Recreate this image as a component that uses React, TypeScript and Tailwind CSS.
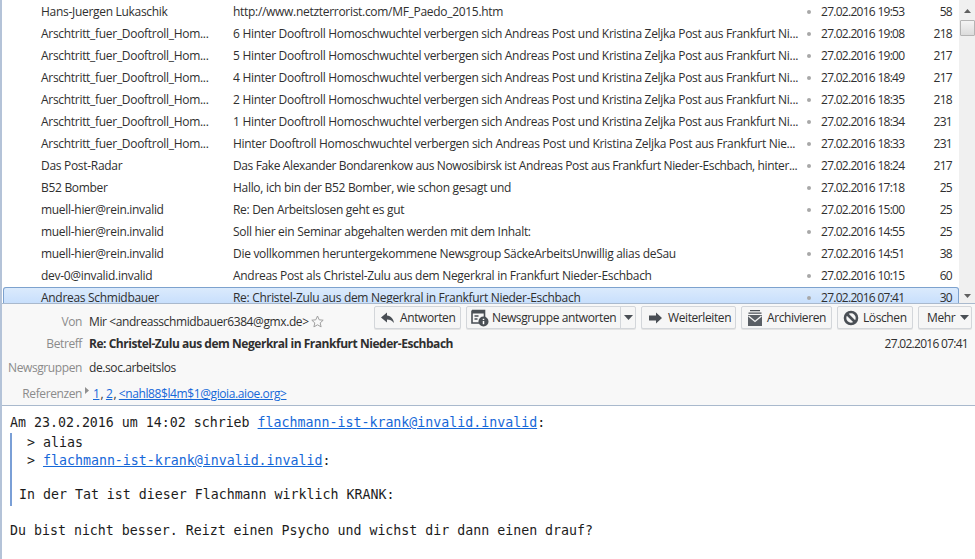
import React from 'react'

const hinter = 'Hinter Dooftroll Homoschwuchtel verbergen sich Andreas Post und Kristina Zeljka Post aus Frankfurt Ni...'
const arsch = 'Arschtritt_fuer_Dooftroll_Hom...'

const rows = [
    ['Hans-Juergen Lukaschik', 'http://www.netzterrorist.com/MF_Paedo_2015.htm', '27.02.2016 19:53', '58'],
    [arsch, '6 ' + hinter, '27.02.2016 19:08', '218'],
    [arsch, '5 ' + hinter, '27.02.2016 19:00', '217'],
    [arsch, '4 ' + hinter, '27.02.2016 18:49', '217'],
    [arsch, '2 ' + hinter, '27.02.2016 18:35', '218'],
    [arsch, '1 ' + hinter, '27.02.2016 18:34', '231'],
    [arsch, 'Hinter Dooftroll Homoschwuchtel verbergen sich Andreas Post und Kristina Zeljka Post aus Frankfurt Nie...', '27.02.2016 18:33', '231'],
    ['Das Post-Radar', 'Das Fake Alexander Bondarenkow aus Nowosibirsk ist Andreas Post aus Frankfurt Nieder-Eschbach, hinter...', '27.02.2016 18:24', '217'],
    ['B52 Bomber', 'Hallo, ich bin der B52 Bomber, wie schon gesagt und', '27.02.2016 17:18', '25'],
    ['muell-hier@rein.invalid', 'Re: Den Arbeitslosen geht es gut', '27.02.2016 15:00', '25'],
    ['muell-hier@rein.invalid', 'Soll hier ein Seminar abgehalten werden mit dem Inhalt:', '27.02.2016 14:55', '25'],
    ['muell-hier@rein.invalid', 'Die vollkommen heruntergekommene Newsgroup SäckeArbeitsUnwillig alias deSau', '27.02.2016 14:51', '38'],
    ['dev-0@invalid.invalid', 'Andreas Post als Christel-Zulu aus dem Negerkral in Frankfurt Nieder-Eschbach', '27.02.2016 10:15', '60'],
    ['Andreas Schmidbauer', 'Re: Christel-Zulu aus dem Negerkral in Frankfurt Nieder-Eschbach', '27.02.2016 07:41', '30'],
]

const ReplyIcon = () => (
    <svg width="16" height="16" viewBox="0 0 16 16"><path d="M7 2.500 1 7.500l6 5V9.500c3 0 5 1 7 3.500-.5-4-3-7-7-7.500z" fill="#4a4f55" /></svg>
)
const ForwardIcon = () => (
    <svg width="16" height="16" viewBox="0 0 16 16"><path d="M9 2.500 15 8l-6 5.500V10.500H2v-5h7z" fill="#4a4f55" /></svg>
)
const NewsIcon = () => (
    <svg width="18" height="18" viewBox="0 0 18 18">
        <path d="M1 1.500h12.500v6.500M1 1.500v12.500h7" fill="none" stroke="#4a4f55" strokeWidth="1.600" />
        <path d="M1 2h12.500v2.500H1z" fill="#4a4f55" />
        <path d="M3.500 7h4M3.500 10h3" stroke="#4a4f55" strokeWidth="1.500" />
        <circle cx="12.500" cy="12.500" r="5" fill="#4a4f55" />
        <path d="M12.500 9.800v1.300M12.500 12v3.200" stroke="#fff" strokeWidth="1.500" />
    </svg>
)
const ArchiveIcon = () => (
    <svg width="16" height="18" viewBox="0 0 16 18">
        <path d="M3 1h10v1.200H3zM1.500 3.500h13v1.200h-13z" fill="#4a4f55" />
        <path d="M1 6h14v11H1z" fill="#5a5f65" />
        <path d="M1.500 7l6.500 5.500L14.500 7" fill="none" stroke="#f4f4f4" strokeWidth="1.300" />
    </svg>
)
const DeleteIcon = () => (
    <svg width="16" height="16" viewBox="0 0 16 16">
        <circle cx="8" cy="8" r="6" fill="none" stroke="#4a4f55" strokeWidth="2.600" />
        <path d="M4 4l8 8" stroke="#4a4f55" strokeWidth="2.600" />
    </svg>
)
const Caret = () => (
    <svg width="9" height="5" viewBox="0 0 9 5"><path d="M0 0h9L4.500 5z" fill="#4a4f55" /></svg>
)

const btn = 'flex h-[23px] items-center whitespace-nowrap rounded-[2px] border border-[#d3d6da] bg-[#f6f6f6] shadow-[0_1px_0_#e4e4e4]'
const link = 'text-[#1668d8] underline'

const HeaderRow = ({ label, children, className, labelClass }: { label: string; className?: string; labelClass?: string; children: React.ReactNode }) => (
    <div className={'flex ' + (className || '')}>
        <span className={'w-[80px] shrink-0 text-right text-[#8b8b8b] ' + (labelClass || '')}>{label}</span>
        <div className="ml-[7px] flex min-w-0 flex-1 items-start">{children}</div>
    </div>
)

export default function App() {
    return (
        <div className="flex h-[559px] w-[975px] flex-col overflow-hidden border-l-2 border-[#b4c3d8] bg-white text-[12px] text-[#2f2f2f] [font-family:'Open_Sans',sans-serif]">
            {/* thread pane */}
            <div className="flex h-[303px] shrink-0 overflow-hidden">
                <div className="min-w-0 flex-1 pt-[1px]">
                    {rows.map((r, i) => {
                        const selected = i === rows.length - 1
                        return (
                            <div
                                key={i}
                                className={
                                    'ml-[1px] flex h-[22px] items-center tracking-[-0.3px] ' +
                                    (selected ? 'rounded-t-[3px] bg-gradient-to-b from-[#dcebfc] to-[#c1dbfc] shadow-[inset_0_0_0_1px_#7da2ce]' : '')
                                }
                            >
                                <span className="w-[230px] shrink-0 whitespace-nowrap pl-[38px]">{r[0]}</span>
                                <span className={'w-[570px] shrink-0 whitespace-nowrap ' + (i === 7 ? 'tracking-[-0.38px]' : '')}>{r[1]}</span>
                                <span className="ml-[4px] h-[4px] w-[4px] shrink-0 rounded-full bg-[#a8a8a8]"></span>
                                <span className="ml-[10px] w-[90px] shrink-0 whitespace-nowrap tracking-[-0.72px]">{r[2]}</span>
                                <span className="w-[41px] shrink-0 text-right tracking-[-0.72px]">{r[3]}</span>
                            </div>
                        )
                    })}
                </div>
                {/* scrollbar */}
                <div className="flex w-[16px] shrink-0 flex-col items-center bg-[#f0f0f0]">
                    <svg className="mt-[9px]" width="7" height="4" viewBox="0 0 7 4"><path d="M0 4 3.500 0 7 4z" fill="#606060" /></svg>
                    <div className="mt-[7px] h-[16px] w-[15px] rounded-[1px] border border-[#b4b4b4] bg-gradient-to-b from-[#f4f4f4] to-[#dcdcdc]"></div>
                    <svg className="mt-auto mb-[5px]" width="7" height="4" viewBox="0 0 7 4"><path d="M0 0 3.500 4 7 0z" fill="#606060" /></svg>
                </div>
            </div>

            {/* message header */}
            <div className="h-[103px] shrink-0 border-y border-[#a9b9cd] bg-[#f8f8f8] pr-[3px] pt-[2px] tracking-[-0.4px]">
                <HeaderRow label="Von" labelClass="pt-[7px]">
                    <span className="pt-[7px]">Mir &lt;andreasschmidbauer6384@gmx.de&gt;</span>
                    <svg className="ml-[2px] mt-[9px]" width="13" height="13" viewBox="0 0 13 13"><path d="M6.500 1 8.200 4.800l4 .4-3 2.700.9 4-3.600-2.100-3.600 2.100.9-4-3-2.700 4-.4z" fill="none" stroke="#a0a0a0" /></svg>
                    <div className="ml-auto flex gap-[5px]">
                        <div className={btn + ' w-[87px] gap-[4px] pl-[5px]'}><ReplyIcon />Antworten</div>
                        <div className={btn + ' w-[170px] pl-[4px]'}>
                            <NewsIcon />
                            <span className="ml-[3px]">Newsgruppe antworten</span>
                            <span className="ml-auto flex h-full w-[15px] items-center justify-center border-l border-[#d3d6da]"><Caret /></span>
                        </div>
                        <div className={btn + ' w-[95px] gap-[5px] pl-[5px]'}><ForwardIcon />Weiterleiten</div>
                        <div className={btn + ' w-[91px] gap-[4px] pl-[5px]'}><ArchiveIcon />Archivieren</div>
                        <div className={btn + ' w-[76px] gap-[4px] pl-[5px]'}><DeleteIcon />Löschen</div>
                        <div className={btn + ' w-[54px] gap-[5px] pl-[8px]'}>Mehr <Caret /></div>
                    </div>
                </HeaderRow>
                <HeaderRow label="Betreff" className="mt-[4px]">
                    <span className="font-bold tracking-[-0.47px]">Re: Christel-Zulu aus dem Negerkral in Frankfurt Nieder-Eschbach</span>
                    <span className="ml-auto mr-[4px] tracking-[-0.72px]">27.02.2016 07:41</span>
                </HeaderRow>
                <HeaderRow label="Newsgruppen" className="mt-[6px]">
                    <span>de.soc.arbeitslos</span>
                </HeaderRow>
                <HeaderRow label="Referenzen" className="mt-[8px]">
                    <svg className="-ml-[4px] mr-[1px] mt-[2px]" width="4" height="7" viewBox="0 0 4 7"><path d="M0 0 4 3.500 0 7z" fill="#909090" /></svg>
                    <span className="ml-[3px]"><a className={link}>1</a><span className="ml-[1px]">,</span> <a className={link}>2</a><span className="ml-[1px]">,</span> <a className={link}>&lt;nahl88$l4m$1@gioia.aioe.org&gt;</a></span>
                </HeaderRow>
            </div>

            {/* message body */}
            <div className="min-h-0 flex-1 whitespace-pre pl-[8px] pt-[9px] text-[13.28px] leading-[16px] text-[#1c1c1c] [font-family:'DejaVu_Sans_Mono',monospace]">
                <div>Am 23.02.2016 um 14:02 schrieb <a className={link}>flachmann-ist-krank@invalid.invalid</a>:</div>
                <div className="mt-[2px] border-l-2 border-[#7a9fd6] pb-[3px] pl-[7px] pt-[1px]">
                    <div className="ml-[8px] leading-[18px]">{'> alias'}</div>
                    <div className="ml-[8px] leading-[18px]">{'> '}<a className={link}>flachmann-ist-krank@invalid.invalid</a>:</div>
                    <div className="mt-[17px]">In der Tat ist dieser Flachmann wirklich KRANK:</div>
                </div>
                <div className="mt-[17px]">Du bist nicht besser. Reizt einen Psycho und wichst dir dann einen drauf?</div>
            </div>
        </div>
    )
}
